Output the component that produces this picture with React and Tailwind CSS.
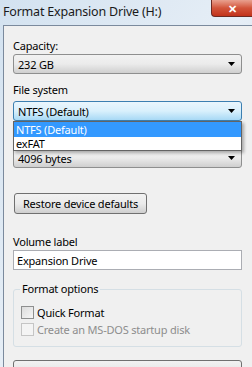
import React from "react";

const font = { fontFamily: '"Noto Sans", "Open Sans", sans-serif' };

function Arrow() {
  return (
    <svg width="7" height="4" viewBox="0 0 7 4" className="shrink-0">
      <path d="M0 0h7L3.5 4z" fill="#000" />
    </svg>
  );
}

function Combo({ value, focused }) {
  return (
    <div
      className={`h-[20px] w-[229px] rounded-[3px] border flex items-center pl-[4px] pr-[6px] text-black ${
        focused
          ? "border-[#3c7fb1] bg-gradient-to-b from-[#eaf6fd] via-[#d9f0fc] to-[#a7d9f5]"
          : "border-[#8e8f8f] bg-gradient-to-b from-[#f2f2f2] via-[#ebebeb] to-[#cfcfcf]"
      }`}
    >
      <span className="flex-1 leading-none">{value}</span>
      <Arrow />
    </div>
  );
}

export default function App() {
  return (
    <div
      className="w-[252px] h-[367px] overflow-hidden relative flex flex-col bg-gradient-to-br from-[#d3e2f0] via-[#e6eef6] to-[#c6d8e9] tracking-[-0.2px]"
      style={font}
    >
      {/* title bar */}
      <div className="h-[25px] shrink-0 flex items-center pl-[3px] text-[12.5px] text-[#1a1a1a] leading-none">
        Format Expansion Drive (H:)
      </div>
      <div className="absolute top-0 right-0 w-[41px] h-[17px] rounded-bl-[4px] border border-t-0 border-r-0 border-[#6d2a22] bg-gradient-to-b from-[#e8a08f] via-[#d2543a] to-[#c2321a] flex items-center justify-center">
        <span className="text-white text-[11px] font-bold leading-none">✕</span>
      </div>

      {/* dialog body */}
      <div className="flex-1 ml-[3px] border-l border-t border-[#7b8a9d] bg-[#f0f0f0] pl-[9px] relative text-[11px] text-black">
        <div className="h-[26px] flex items-end leading-none pb-[1px]">Capacity:</div>
        <div className="mt-[2px]">
          <Combo value="232 GB" />
        </div>
        <div className="h-[22px] flex items-end leading-none pb-[1px]">File system</div>
        <div className="mt-[5px]">
          <Combo value="NTFS (Default)" focused />
        </div>
        <div className="h-[10px]" />
        <div className="mt-[17px]">
          <Combo value="4096 bytes" />
        </div>

        <button className="mt-[25px] ml-[1px] h-[21px] w-[133px] rounded-[3px] border border-[#707070] bg-gradient-to-b from-[#f2f2f2] via-[#ebebeb] to-[#cfcfcf] leading-none">
          Restore device defaults
        </button>

        <div className="mt-[22px] leading-none">Volume label</div>
        <div className="mt-[3px] h-[20px] w-[229px] border border-[#abadb3] bg-white flex items-center pl-[3px] leading-none">
          Expansion Drive
        </div>

        {/* format options group */}
        <div className="mt-[19px] relative w-[229px] h-[58px] border border-[#d5dfe5] rounded-[3px]">
          <div className="absolute -top-[7px] left-[6px] px-[2px] bg-[#f0f0f0] leading-none">
            Format options
          </div>
          <div className="mt-[16px] ml-[7px] flex items-center gap-[3px] leading-none">
            <span className="w-[13px] h-[13px] border border-[#8e8f8f] bg-gradient-to-br from-[#dcdcdc] to-[#f6f6f6]" />
            Quick Format
          </div>
          <div className="mt-[4px] ml-[7px] flex items-center gap-[3px] leading-none text-[#8d8d8d]">
            <span className="w-[13px] h-[13px] border border-[#c5c5c5] bg-[#f4f4f4]" />
            Create an MS-DOS startup disk
          </div>
        </div>

        <div className="mt-[13px] h-[20px] w-[229px] rounded-[3px] border border-[#707070] bg-gradient-to-b from-[#f2f2f2] to-[#dedede]" />

        {/* open dropdown list */}
        <div className="absolute top-[95px] left-[9px] w-[229px] h-[30px] bg-white border border-[#646464] shadow-[2px_2px_3px_rgba(0,0,0,0.3)] leading-none">
          <div className="h-[15px] bg-[#3399ff] text-white flex items-center pl-[2px]">NTFS (Default)</div>
          <div className="h-[13px] flex items-center pl-[2px]">exFAT</div>
        </div>
      </div>
    </div>
  );
}
